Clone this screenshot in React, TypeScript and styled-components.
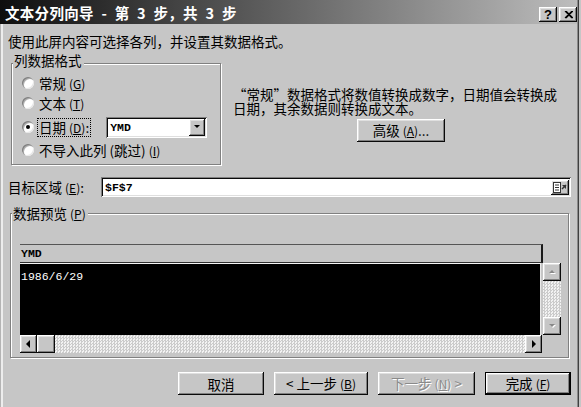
import React from 'react';
import styled, { createGlobalStyle, css } from 'styled-components';

const FACE = '#c6c6c6';

const GlobalStyle = createGlobalStyle`
  html, body {
    margin: 0;
    padding: 0;
    background: ${FACE};
  }
  body {
    font-family: "Noto Sans CJK SC", "Liberation Sans", sans-serif;
    font-size: 13.5px;
    color: #000;
  }
`;

const raised = css`
  background: ${FACE};
  box-shadow: inset -1px -1px 0 #0a0a0a, inset 1px 1px 0 #fff,
    inset -2px -2px 0 #808080, inset 2px 2px 0 #dfdfdf;
`;

const sunken = css`
  box-shadow: inset 1px 1px 0 #808080, inset -1px -1px 0 #fff,
    inset 2px 2px 0 #0a0a0a, inset -2px -2px 0 #dfdfdf;
`;

const mono = css`
  font-family: "Liberation Mono", "DejaVu Sans Mono", monospace;
  font-size: 11.5px;
`;

const Window = styled.div`
  width: 581px;
  height: 407px;
  box-sizing: border-box;
  display: flex;
  flex-direction: column;
  overflow: hidden;
  background: ${FACE};
  box-shadow: inset 1px 0 0 #b4b4b4, inset 3px 0 0 #ededed,
    inset -2px 0 0 ${FACE}, inset -3px 0 0 #404040, inset -4px 0 0 #8a8a8a;
`;

const TitleBar = styled.div`
  height: 24px;
  margin-right: 4px;
  padding-left: 5px;
  display: flex;
  align-items: center;
  background: linear-gradient(90deg, #0e0e0e 0%, #5c5c5c 45%, #bdbdbd 100%);
`;

const TitleText = styled.div`
  color: #fff;
  font-weight: bold;
  font-size: 14.5px;
  letter-spacing: 0.3px;
  word-spacing: 4px;
  white-space: pre;
`;

const CaptionButtons = styled.div`
  margin-left: auto;
  align-self: flex-start;
  margin-top: 7px;
  display: flex;
  gap: 2px;
`;

const CaptionButton = styled.div`
  ${raised};
  width: 18px;
  height: 15px;
  display: flex;
  align-items: center;
  justify-content: center;
  font-family: "Liberation Sans", sans-serif;
  font-weight: bold;
  font-size: 13px;
  line-height: 15px;
`;

const Body = styled.div`
  flex: 1;
  display: flex;
  flex-direction: column;
  padding: 0 10px 0 8px;
`;

const Hint = styled.div`
  margin-top: 9px;
  line-height: 16px;
`;

const TopSection = styled.div`
  display: flex;
  align-items: flex-start;
  margin-top: 3px;
`;

const GroupBox = styled.fieldset<{ $w: number; $ml: number; $mt?: number }>`
  margin: ${(p) => p.$mt ?? 0}px 0 0 ${(p) => p.$ml}px;
  padding: 0;
  width: ${(p) => p.$w}px;
  min-width: 0;
  box-sizing: border-box;
  border: 1px solid #808080;
  box-shadow: 1px 1px 0 #fff, inset 1px 1px 0 #fff;
`;

const Legend = styled.legend<{ $drop?: number }>`
  margin-left: 1px;
  padding: 0 2px ${(p) => p.$drop ?? 0}px 1px;
  line-height: 16px;
  background: ${FACE};
`;

const RadioList = styled.div`
  display: flex;
  flex-direction: column;
  padding: 0 0 4px 10px;
`;

const RadioRow = styled.div<{ $h: number }>`
  display: flex;
  align-items: center;
  gap: 3px;
  height: ${(p) => p.$h}px;
`;

const RadioDot = styled.span<{ $on?: boolean }>`
  position: relative;
  flex: none;
  width: 12px;
  height: 12px;
  border-radius: 50%;
  background: #fff;
  box-shadow: inset 1px 1px 0 #808080, inset 2px 2px 0 #b0b0b0,
    inset -1px -1px 0 #e6e6e6;
  ${(p) =>
    p.$on &&
    css`
      &::after {
        content: '';
        position: absolute;
        left: 4px;
        top: 4px;
        width: 4px;
        height: 4px;
        border-radius: 50%;
        background: #000;
      }
    `}
`;

const Caption = styled.span<{ $focus?: boolean }>`
  line-height: 16px;
  white-space: nowrap;
  padding: 0 2px;
  ${(p) =>
    p.$focus &&
    css`
      padding: 0 1px;
      border: 1px dotted #000;
    `}
`;

const KeyHint = styled.span`
  font-size: 12px;
  margin-left: 3px;
`;

const Combo = styled.div`
  ${sunken};
  background: #fff;
  margin-left: 12px;
  width: 101px;
  height: 21px;
  box-sizing: border-box;
  display: flex;
  align-items: center;
  padding: 0 2px 0 4px;
`;

const ComboValue = styled.span`
  ${mono};
  font-weight: bold;
`;

const DropButton = styled.div`
  ${raised};
  margin-left: auto;
  width: 16px;
  height: 17px;
  display: flex;
  align-items: center;
  justify-content: center;
`;

const Description = styled.div`
  margin-left: 12px;
  padding-top: 35px;
  display: flex;
  flex-direction: column;
`;

const DescText = styled.div`
  line-height: 14px;
  white-space: nowrap;
`;

const PushButton = styled.button<{ $w: number; $default?: boolean }>`
  ${raised};
  width: ${(p) => p.$w}px;
  height: 23px;
  box-sizing: border-box;
  border: ${(p) => (p.$default ? '1px solid #000' : 'none')};
  padding: 0;
  font: inherit;
  color: #000;
  line-height: 20px;
  white-space: nowrap;
  &:disabled {
    color: #8a8a8a;
    text-shadow: 1px 1px 0 #fff;
  }
`;

const AdvancedButton = styled(PushButton)`
  margin-top: 4px;
  margin-left: 124px;
`;

const TargetRow = styled.div`
  display: flex;
  align-items: center;
  margin-top: 12px;
`;

const FieldLabel = styled.span`
  width: 93px;
  line-height: 16px;
  white-space: nowrap;
`;

const RefInput = styled.div`
  ${sunken};
  background: #fff;
  width: 470px;
  height: 20px;
  box-sizing: border-box;
  display: flex;
  align-items: center;
  padding: 0 2px 0 4px;
`;

const RefValue = styled.span`
  ${mono};
  font-weight: bold;
`;

const RefButton = styled.div`
  ${raised};
  margin-left: auto;
  width: 18px;
  height: 15px;
  display: flex;
  align-items: center;
  justify-content: center;
`;

const PreviewInner = styled.div`
  padding: 22px 0 4px 9px;
`;

const Preview = styled.div`
  width: 541px;
  height: 109px;
  display: grid;
  grid-template-columns: 523px 18px;
  grid-template-rows: 19px 72px 18px;
`;

const PreviewHeader = styled.div`
  grid-column: 1;
  grid-row: 1;
  ${mono};
  font-weight: bold;
  line-height: 17px;
  padding-left: 1px;
  box-sizing: border-box;
  border-top: 1px solid #555;
  border-bottom: 1px solid #303030;
  border-right: 2px solid #1a1a1a;
`;

const PreviewBody = styled.div`
  grid-column: 1;
  grid-row: 2;
  margin-right: 2px;
  background: #000;
  color: #fff;
  border-top: 1px solid #f4f4f4;
  border-right: 1px solid #e8e8e8;
  ${mono};
  line-height: 14px;
  padding: 6px 0 0 1px;
`;

const dither = css`
  background-color: #eeeeee;
  background-image: repeating-conic-gradient(#cbcbcb 0 25%, #f2f2f2 0 50%);
  background-size: 3px 3px;
`;

const VScroll = styled.div`
  grid-column: 2;
  grid-row: 2;
  display: flex;
  flex-direction: column;
  ${dither};
`;

const HScroll = styled.div`
  grid-column: 1;
  grid-row: 3;
  margin-right: 1px;
  display: flex;
  ${dither};
`;

const ScrollButton = styled.div<{ $w: number; $h: number }>`
  ${raised};
  flex: none;
  width: ${(p) => p.$w}px;
  height: ${(p) => p.$h}px;
  display: flex;
  align-items: center;
  justify-content: center;
`;

const Track = styled.div`
  flex: 1;
`;

const Footer = styled.div`
  display: flex;
  justify-content: flex-end;
  gap: 10px;
  margin-top: 14px;
`;

const Key = ({ k }: { k: string }) => (
  <KeyHint>
    (<u>{k}</u>)
  </KeyHint>
);

type Dir = 'up' | 'down' | 'left' | 'right';

const Arrow = ({ dir, muted }: { dir: Dir; muted?: boolean }) => {
  const pts: Record<Dir, string> = {
    up: '1,5 4,2 7,5',
    down: '1,2 4,5 7,2',
    left: '5,0 5,8 1,4',
    right: '2,0 2,8 6,4',
  };
  const fill = muted ? '#888' : '#000';
  return (
    <svg width="8" height="8" viewBox="0 0 8 8">
      {muted && <polygon points={pts[dir]} fill="#fff" transform="translate(1,1)" />}
      <polygon points={pts[dir]} fill={fill} />
    </svg>
  );
};

const CloseGlyph = () => (
  <svg width="9" height="8" viewBox="0 0 9 8">
    <path d="M1 0 L8 7 M2 0 L9 7 M8 0 L1 7 M9 0 L2 7" stroke="#000" strokeWidth="1.1" />
  </svg>
);

const CollapseGlyph = () => (
  <svg width="14" height="11" viewBox="0 0 14 11">
    <rect x="0.5" y="0.5" width="7" height="10" fill="#fff" stroke="#333" />
    <path d="M2 3 H6 M2 5.5 H6 M2 8 H6" stroke="#333" strokeWidth="1" />
    <path d="M9 3 L13 3 L13 7 Z" fill="#333" />
    <path d="M13 3 L9 7" stroke="#333" strokeWidth="1.4" />
  </svg>
);

export default function App() {
  return (
    <>
      <GlobalStyle />
      <Window>
        <TitleBar>
          <TitleText>文本分列向导 - 第 3 步，共 3 步</TitleText>
          <CaptionButtons>
            <CaptionButton>?</CaptionButton>
            <CaptionButton>
              <CloseGlyph />
            </CaptionButton>
          </CaptionButtons>
        </TitleBar>
        <Body>
          <Hint>使用此屏内容可选择各列，并设置其数据格式。</Hint>
          <TopSection>
            <GroupBox $w={210} $ml={3}>
              <Legend $drop={6}>列数据格式</Legend>
              <RadioList>
                <RadioRow $h={18}>
                  <RadioDot />
                  <Caption>
                    常规<Key k="G" />
                  </Caption>
                </RadioRow>
                <RadioRow $h={22}>
                  <RadioDot />
                  <Caption>
                    文本<Key k="T" />
                  </Caption>
                </RadioRow>
                <RadioRow $h={26}>
                  <RadioDot $on />
                  <Caption $focus>
                    日期<Key k="D" />:
                  </Caption>
                  <Combo>
                    <ComboValue>YMD</ComboValue>
                    <DropButton>
                      <Arrow dir="down" />
                    </DropButton>
                  </Combo>
                </RadioRow>
                <RadioRow $h={20}>
                  <RadioDot />
                  <Caption>
                    不导入此列 (跳过)<Key k="I" />
                  </Caption>
                </RadioRow>
              </RadioList>
            </GroupBox>
            <Description>
              <DescText>
                “常规”数据格式将数值转换成数字，日期值会转换成
                <br />
                日期，其余数据则转换成文本。
              </DescText>
              <AdvancedButton $w={88}>
                高级<Key k="A" />...
              </AdvancedButton>
            </Description>
          </TopSection>
          <TargetRow>
            <FieldLabel>
              目标区域<Key k="E" />:
            </FieldLabel>
            <RefInput>
              <RefValue>$F$7</RefValue>
              <RefButton>
                <CollapseGlyph />
              </RefButton>
            </RefInput>
          </TargetRow>
          <GroupBox $w={559} $ml={2} $mt={8}>
            <Legend>
              数据预览<Key k="P" />
            </Legend>
            <PreviewInner>
              <Preview>
                <PreviewHeader>YMD</PreviewHeader>
                <PreviewBody>1986/6/29</PreviewBody>
                <VScroll>
                  <ScrollButton $w={18} $h={18}>
                    <Arrow dir="up" muted />
                  </ScrollButton>
                  <Track />
                  <ScrollButton $w={18} $h={18}>
                    <Arrow dir="down" muted />
                  </ScrollButton>
                </VScroll>
                <HScroll>
                  <ScrollButton $w={17} $h={18}>
                    <Arrow dir="left" />
                  </ScrollButton>
                  <ScrollButton $w={18} $h={18} />
                  <Track />
                  <ScrollButton $w={17} $h={18}>
                    <Arrow dir="right" />
                  </ScrollButton>
                </HScroll>
              </Preview>
            </PreviewInner>
          </GroupBox>
          <Footer>
            <PushButton $w={86}>取消</PushButton>
            <PushButton $w={94}>
              &lt; 上一步<Key k="B" />
            </PushButton>
            <PushButton $w={97} disabled>
              下一步<Key k="N" /> &gt;
            </PushButton>
            <PushButton $w={86} $default>
              完成<Key k="F" />
            </PushButton>
          </Footer>
        </Body>
      </Window>
    </>
  );
}
